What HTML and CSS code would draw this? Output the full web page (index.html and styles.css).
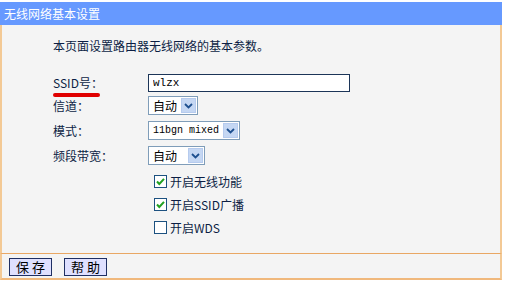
FILE: index.html
```html
<!DOCTYPE html>
<html lang="zh-CN">
<head>
  <meta charset="UTF-8" />
  <title>无线网络基本设置</title>
  <link rel="stylesheet" href="styles.css">
</head>
<body>
  <div class="panel">
    <div class="title">无线网络基本设置</div>

    <div class="content">
      <p class="intro">本页面设置路由器无线网络的基本参数。</p>

      <div class="row row-ssid">
        <label class="label">SSID号：<span class="mark"></span></label>
        <input type="text" class="text-input" value="wlzx" />
      </div>

      <div class="row">
        <span class="label">信道：</span>
        <div class="select w-channel"><span class="value">自动</span><span class="arrow"><svg width="9" height="6" viewBox="0 0 9 6"><path d="M1 1 L4.5 4.5 L8 1" fill="none" stroke="#1d4f8f" stroke-width="1.8"/></svg></span></div>
      </div>

      <div class="row">
        <span class="label">模式：</span>
        <div class="select w-mode"><span class="value mono">11bgn mixed</span><span class="arrow"><svg width="9" height="6" viewBox="0 0 9 6"><path d="M1 1 L4.5 4.5 L8 1" fill="none" stroke="#1d4f8f" stroke-width="1.8"/></svg></span></div>
      </div>

      <div class="row">
        <span class="label">频段带宽：</span>
        <div class="select w-band"><span class="value">自动</span><span class="arrow"><svg width="9" height="6" viewBox="0 0 9 6"><path d="M1 1 L4.5 4.5 L8 1" fill="none" stroke="#1d4f8f" stroke-width="1.8"/></svg></span></div>
      </div>

      <div class="checks">
        <div class="check-row">
          <span class="box"><svg width="11" height="11" viewBox="0 0 11 11"><path d="M2 5.5 L4.3 8 L9 2.8" fill="none" stroke="#21a121" stroke-width="2"/></svg></span>
          <span>开启无线功能</span>
        </div>
        <div class="check-row">
          <span class="box"><svg width="11" height="11" viewBox="0 0 11 11"><path d="M2 5.5 L4.3 8 L9 2.8" fill="none" stroke="#21a121" stroke-width="2"/></svg></span>
          <span>开启SSID广播</span>
        </div>
        <div class="check-row">
          <span class="box"></span>
          <span>开启WDS</span>
        </div>
      </div>
    </div>

    <div class="footer">
      <button class="btn">保 存</button>
      <button class="btn">帮 助</button>
    </div>
  </div>
</body>
</html>
```

FILE: styles.css
```css
* { box-sizing: border-box; }

body {
  margin: 0;
  padding-top: 2px;
  background: #fff;
  font-family: "Noto Sans CJK SC", "Noto Sans", sans-serif;
  font-size: 12px;
  color: #0c1e44;
}

.panel {
  width: 502px;
}

.title {
  height: 23px;
  line-height: 23px;
  padding-left: 4px;
  background: #6699ff;
  color: #fff;
  font-size: 12px;
}

.content {
  background: #f4f4f4;
  border-left: 2px solid #f3c995;
  border-right: 2px solid #f3c995;
  padding: 11px 0 14px 51px;
}

.intro {
  margin: 0 0 16px;
  height: 20px;
  line-height: 20px;
}

.row {
  display: flex;
  align-items: center;
  height: 25px;
}

.row-ssid {
  height: 21px;
}

.label {
  position: relative;
  width: 95px;
  line-height: 16px;
}

.mark {
  position: absolute;
  left: 0;
  top: 18px;
  width: 47px;
  height: 4px;
  border-radius: 2px;
  background: #e00000;
}

.text-input {
  width: 202px;
  height: 18px;
  padding: 0 4px;
  border: 1px solid #1c3558;
  background: #fff;
  font-family: "Liberation Mono", monospace;
  font-size: 11px;
  color: #000;
  outline: none;
}

.select {
  display: flex;
  align-items: center;
  justify-content: space-between;
  height: 19px;
  padding: 0 1px 0 4px;
  border: 1px solid #7f9db9;
  background: #fff;
  white-space: nowrap;
}

.w-channel { width: 50px; }
.w-mode { width: 92px; }
.w-band { width: 57px; }

.value {
  line-height: 17px;
  color: #000;
}

.mono {
  font-family: "Liberation Mono", monospace;
  font-size: 10px;
}

.arrow {
  display: flex;
  align-items: center;
  justify-content: center;
  flex: none;
  width: 15px;
  height: 15px;
  background: #c5d7f3;
  border: 1px solid #b6cbee;
}

.checks {
  margin-top: 2px;
  padding-left: 101px;
}

.check-row {
  display: flex;
  align-items: center;
  gap: 3px;
  height: 23px;
}

.box {
  display: flex;
  align-items: center;
  justify-content: center;
  width: 13px;
  height: 13px;
  border: 1px solid #1c5180;
  background: #fff;
}

.footer {
  display: flex;
  gap: 12px;
  height: 27px;
  padding: 4px 0 0 7px;
  background: #f4f4f4;
  border: 2px solid #f3c995;
  border-top: 1px solid #e9a764;
  border-bottom: 2px solid #f0b87c;
}

.btn {
  width: 43px;
  height: 18px;
  padding: 0;
  border: 1px solid #1f2f63;
  background: #dfe0ff;
  font-family: "Noto Sans CJK SC", sans-serif;
  font-size: 13px;
  line-height: 16px;
  color: #000;
}
```
